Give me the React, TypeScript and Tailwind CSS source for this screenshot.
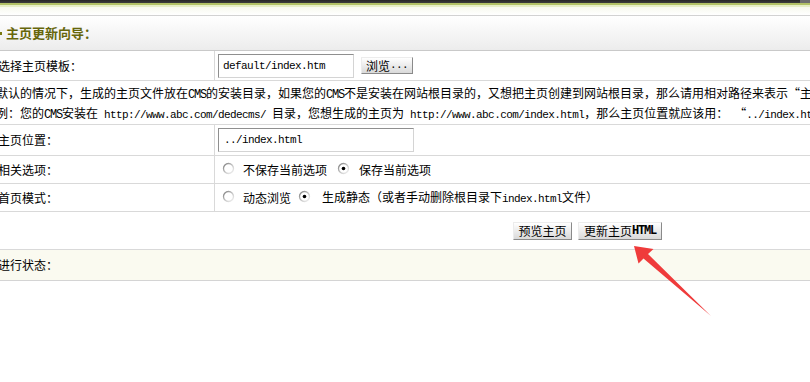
import React from "react";

const M = ({ children, className = "" }: { children: React.ReactNode; className?: string }) => (
  <span className={"font-['Liberation_Mono',monospace] text-[11px] tracking-[-0.6px] " + className}>{children}</span>
);

const C = ({ children, className = "" }: { children: React.ReactNode; className?: string }) => (
  <span className={"font-['Liberation_Mono',monospace] text-[12px] tracking-[-1.2px] " + className}>{children}</span>
);

const Radio = ({ checked }: { checked?: boolean }) => (
  <svg width="13" height="13" viewBox="0 0 13 13" className="shrink-0 mb-[3px]">
    <defs>
      <linearGradient id="rgrad" x1="0" y1="0" x2="1" y2="1">
        <stop offset="0" stopColor="#7a7a7a" />
        <stop offset="0.55" stopColor="#c8c8c8" />
        <stop offset="1" stopColor="#f4f4f4" />
      </linearGradient>
    </defs>
    <circle cx="6.5" cy="6.5" r="5" fill="#ffffff" stroke="url(#rgrad)" strokeWidth="1.3" />
    {checked && <circle cx="6.5" cy="6.5" r="1.8" fill="#000000" />}
  </svg>
);

const btn =
  "flex items-center justify-center leading-none border border-[#ececec] border-r-[#8a8a8a] border-b-[#8a8a8a] bg-linear-to-b from-[#ffffff] to-[#d9d9d9] text-black";

const label = "w-[225px] shrink-0 h-full pl-[8px] flex items-center border-r border-[#d9d9d9]";

export default function App() {
  return (
    <div className="relative w-[810px] h-[382px] overflow-hidden bg-white text-[12px] leading-[18px] text-black whitespace-nowrap font-['Noto_Sans_CJK_SC',sans-serif]">
      {/* top bar */}
      <div className="flex h-[3px]">
        <div className="flex-1 bg-linear-to-b from-[#262626] to-[#3c3c3c]" />
        <div className="w-[10px] bg-[#6e6e6e]" />
      </div>
      <div className="h-[2px] bg-[#b2c266]" />
      <div className="h-[2px] bg-[#e6eec6]" />
      <div className="h-[8px] bg-linear-to-b from-[#f7f9ee] to-white" />

      <div className="ml-[-10px] w-[840px]">
        {/* header */}
        <div className="h-[36px] border-t border-b border-t-[#d2d2d2] border-b-[#c9c9c9] bg-linear-to-b from-white to-[#ececec] flex items-center">
          <span className="ml-[10px] w-[2px] h-[3px] bg-[#7a7a10] mt-[1px]" />
          <span className="ml-[4px] font-bold text-[#66660a] text-[13px]">主页更新向导：</span>
        </div>

        {/* row 1 */}
        <div className="flex h-[30px] border-b border-[#d9d9d9]">
          <div className={label}>选择主页模板：</div>
          <div className="flex items-center pl-[3px]">
            <div className="w-[136px] h-[24px] border border-[#8f8f8f] border-r-[#d4d4d4] border-b-[#d4d4d4] flex items-center pl-[4px]">
              <M>default/index.htm</M>
            </div>
            <button className={btn + " ml-[7px] w-[52px] h-[17px]"}>
              浏览<M>...</M>
            </button>
          </div>
        </div>

        {/* row 2 */}
        <div className="flex items-center h-[44px] border-b border-[#d9d9d9] pl-[6px] pt-[3px]">
          <div className="flex flex-col">
            <div>
              默认的情况下，生成的主页文件放在<C>CMS</C>的安装目录，如果您的<C>CMS</C>
              不是安装在网站根目录的，又想把主页创建到网站根目录，那么请用相对路径来表示“主页位置”。
            </div>
            <div>
              例：您的<C>CMS</C>安装在<M> http://www.abc.com/dedecms/ </M>目录，您想生成的主页为
              <M> http://www.abc.com/index.html</M>，那么主页位置就应该用：<M> </M>“<M>../index.html</M>”
            </div>
          </div>
        </div>

        {/* row 3 */}
        <div className="flex h-[31px] border-b border-[#d9d9d9]">
          <div className={label}>主页位置：</div>
          <div className="flex items-center pl-[3px]">
            <div className="w-[196px] h-[24px] border border-[#8f8f8f] border-r-[#d4d4d4] border-b-[#d4d4d4] flex items-center pl-[5px]">
              <M>../index.html</M>
            </div>
          </div>
        </div>

        {/* row 4 */}
        <div className="flex h-[28px] border-b border-[#d9d9d9]">
          <div className={label}>相关选项：</div>
          <div className="flex items-center pl-[7px]">
            <Radio />
            <span className="ml-[8px]">不保存当前选项</span>
            <span className="ml-[10px] flex items-center">
              <Radio checked />
            </span>
            <span className="ml-[9px]">保存当前选项</span>
          </div>
        </div>

        {/* row 5 */}
        <div className="flex h-[28px] border-b border-[#d9d9d9]">
          <div className={label}>首页模式：</div>
          <div className="flex items-center pl-[7px]">
            <Radio />
            <span className="ml-[8px]">动态浏览</span>
            <span className="ml-[7px] flex items-center">
              <Radio checked />
            </span>
            <span className="ml-[11px]">
              生成静态（或者手动删除根目录下<M>index.html</M>文件）
            </span>
          </div>
        </div>

        {/* row 6 */}
        <div className="flex items-center h-[38px] border-b border-[#d9d9d9] pl-[523px] pt-[1px]">
          <button className={btn + " w-[59px] h-[18px]"}>预览主页</button>
          <button className={btn + " ml-[6px] w-[84px] h-[18px]"}>
            更新主页<C className="font-bold">HTML</C>
          </button>
        </div>

        {/* row 7 */}
        <div className="flex items-center h-[31px] border-b border-[#d4d4d4] bg-[#fafaf0] pl-[8px]">
          进行状态：
        </div>
      </div>

      {/* annotation arrow */}
      <svg className="absolute left-0 top-0 pointer-events-none" width="810" height="382" viewBox="0 0 810 382">
        <polygon points="634,246 638.5,263.5 643.5,258.5 711,316 648,254 653.5,249" fill="#ef3b3b" />
      </svg>
    </div>
  );
}
